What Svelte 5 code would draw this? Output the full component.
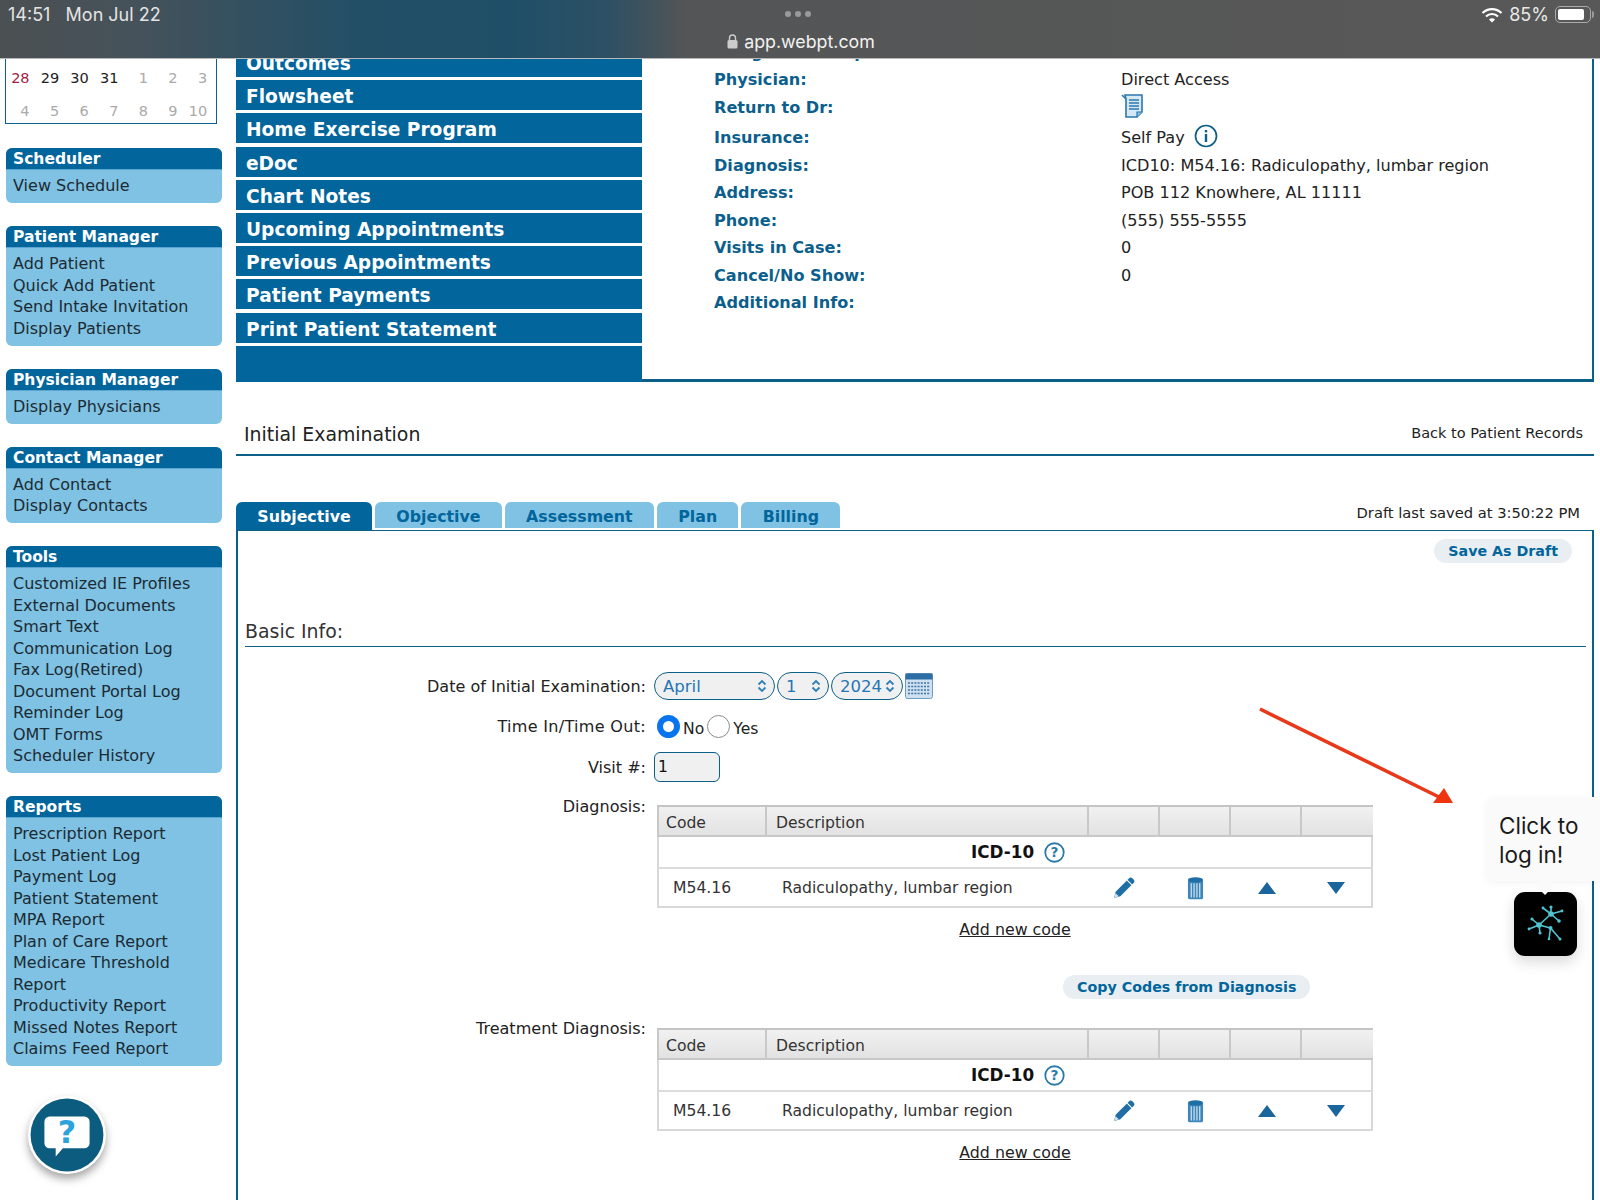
<script>
  const sidebar = [
    { title: 'Scheduler', items: ['View Schedule'] },
    { title: 'Patient Manager', items: ['Add Patient', 'Quick Add Patient', 'Send Intake Invitation', 'Display Patients'] },
    { title: 'Physician Manager', items: ['Display Physicians'] },
    { title: 'Contact Manager', items: ['Add Contact', 'Display Contacts'] },
    { title: 'Tools', items: ['Customized IE Profiles', 'External Documents', 'Smart Text', 'Communication Log', 'Fax Log(Retired)', 'Document Portal Log', 'Reminder Log', 'OMT Forms', 'Scheduler History'] },
    { title: 'Reports', items: ['Prescription Report', 'Lost Patient Log', 'Payment Log', 'Patient Statement', 'MPA Report', 'Plan of Care Report', 'Medicare Threshold Report', 'Productivity Report', 'Missed Notes Report', 'Claims Feed Report'] }
  ];
  const menu = ['Outcomes', 'Flowsheet', 'Home Exercise Program', 'eDoc', 'Chart Notes', 'Upcoming Appointments', 'Previous Appointments', 'Patient Payments', 'Print Patient Statement'];
  const tabs = ['Subjective', 'Objective', 'Assessment', 'Plan', 'Billing'];
  const week1 = [['28', 'red'], ['29', ''], ['30', ''], ['31', ''], ['1', 'dim'], ['2', 'dim'], ['3', 'dim']];
  const week2 = ['4', '5', '6', '7', '8', '9', '10'];
  const diagTables = [
    { label: 'Diagnosis:', copy: true },
    { label: 'Treatment Diagnosis:', copy: false }
  ];
</script>

{#snippet updown()}
  <svg class="chev" viewBox="0 0 10 14" width="10" height="14"><path d="M1.5 5.5 5 2l3.5 3.5M1.5 8.5 5 12l3.5-3.5" fill="none" stroke="#2f7fb8" stroke-width="1.8"/></svg>
{/snippet}

<div class="page">
  <header class="bar">
    <div class="bar-top">
      <span class="clock">14:51&nbsp;&nbsp; Mon Jul 22</span>
      <span class="dots"><i></i><i></i><i></i></span>
      <span class="status">
        <svg width="22" height="16" viewBox="0 0 22 16"><path d="M1.5 6a13.5 13.5 0 0 1 19 0" fill="none" stroke="#fff" stroke-width="2.2"/><path d="M5 9.5a8.5 8.5 0 0 1 12 0" fill="none" stroke="#fff" stroke-width="2.2"/><path d="M8 12.5 11 15.5l3-3a4.2 4.2 0 0 0-6 0z" fill="#fff"/></svg>
        <span>85%</span>
        <span class="battery"><b></b></span>
      </span>
    </div>
    <div class="url">
      <svg width="11" height="15" viewBox="0 0 11 15"><path d="M2.5 6V4a3 3 0 0 1 6 0v2" fill="none" stroke="#ccc" stroke-width="1.4"/><rect x="0.5" y="6" width="10" height="8.5" rx="1.5" fill="#ccc"/></svg>
      <span>app.webpt.com</span>
    </div>
  </header>

  <div class="body">
    <aside class="side">
      <div class="cal">
        <div class="cal-row">{#each week1 as d}<span class={d[1]}>{d[0]}</span>{/each}</div>
        <div class="cal-row">{#each week2 as d}<span class="dim">{d}</span>{/each}</div>
      </div>
      {#each sidebar as s}
        <section class="box">
          <h3>{s.title}</h3>
          <ul>{#each s.items as it}<li>{it}</li>{/each}</ul>
        </section>
      {/each}
      <div class="help">
        <svg width="78" height="78" viewBox="0 0 76 76">
          <circle cx="38" cy="38" r="37.5" fill="#fff"/>
          <circle cx="38" cy="38" r="35.5" fill="#0c5c80"/>
          <path d="M21 20h34a5 5 0 0 1 5 5v21a5 5 0 0 1-5 5H34l-7 8v-8h-6a5 5 0 0 1-5-5V25a5 5 0 0 1 5-5z" fill="#fff"/>
          <text x="38" y="46" text-anchor="middle" class="q">?</text>
        </svg>
      </div>
    </aside>

    <main class="main">
      <div class="top">
        <nav class="menu">
          {#each menu as m}<a href="#x">{m}</a>{/each}
          <div class="menu-end"></div>
        </nav>
        <div class="info">
          <div class="irow"><b>Assigned Therapist:</b><span></span></div>
          <div class="irow"><b>Physician:</b><span>Direct Access</span></div>
          <div class="irow"><b>Return to Dr:</b><span>
            <svg class="doc" width="22" height="24" viewBox="0 0 22 24"><path d="M4 1h17v17l-5 5H5V5z" fill="#d5e8f4" stroke="#2b78ad" stroke-width="1.6"/><path d="M1 1l4 4M8 6h10M8 9h10M8 12h10M8 15h10" stroke="#2b78ad" stroke-width="1.6"/><path d="M16 23v-5h5" fill="#8fc0de" stroke="#2b78ad" stroke-width="1.2"/></svg>
          </span></div>
          <div class="irow"><b>Insurance:</b><span class="ins">Self Pay
            <svg width="24" height="24" viewBox="0 0 24 24"><circle cx="12" cy="12" r="10.5" fill="none" stroke="#0c5f86" stroke-width="1.7"/><rect x="10.8" y="10" width="2.4" height="8" fill="#0c5f86"/><rect x="10.8" y="6" width="2.4" height="2.4" fill="#0c5f86"/></svg>
          </span></div>
          <div class="irow"><b>Diagnosis:</b><span>ICD10: M54.16: Radiculopathy, lumbar region</span></div>
          <div class="irow"><b>Address:</b><span>POB 112 Knowhere, AL 11111</span></div>
          <div class="irow"><b>Phone:</b><span>(555) 555-5555</span></div>
          <div class="irow"><b>Visits in Case:</b><span>0</span></div>
          <div class="irow"><b>Cancel/No Show:</b><span>0</span></div>
          <div class="irow"><b>Additional Info:</b><span></span></div>
        </div>
      </div>

      <div class="title-row">
        <h1>Initial Examination</h1>
        <a href="#x">Back to Patient Records</a>
      </div>

      <div class="tab-row">
        <div class="tabs">
          {#each tabs as t, i}<span class="tab" class:active={i === 0}>{t}</span>{/each}
        </div>
        <span class="draft">Draft last saved at 3:50:22 PM</span>
      </div>

      <div class="panel">
        <div class="save-row"><button>Save As Draft</button></div>
        <h2>Basic Info:</h2>

        <div class="frow date-row">
          <label for="m">Date of Initial Examination:</label>
          <div class="ctl">
            <span class="sel s1"><select id="m"><option>April</option></select>{@render updown()}</span>
            <span class="sel s2"><select><option>1</option></select>{@render updown()}</span>
            <span class="sel s3"><select><option>2024</option></select>{@render updown()}</span>
            <svg class="calicon" width="28" height="26" viewBox="0 0 28 26">
              <rect x="0.5" y="0.5" width="27" height="25" rx="2" fill="#cfe0ee" stroke="#6d9cc4"/>
              <rect x="0.5" y="0.5" width="27" height="6" fill="#2d6ea5"/>
              <path d="M3 10h22M3 13.5h22M3 17h22M3 20.5h22" stroke="#3e74ab" stroke-width="1.6" stroke-dasharray="2 1.2"/>
            </svg>
          </div>
        </div>

        <div class="frow time-row">
          <span class="lab">Time In/Time Out:</span>
          <div class="ctl radios">
            <input type="radio" name="t" checked /><span>No</span>
            <input type="radio" name="t" /><span>Yes</span>
          </div>
        </div>

        <div class="frow visit-row">
          <label for="v">Visit #:</label>
          <div class="ctl"><input id="v" class="visit" value="1" /></div>
        </div>

        {#each diagTables as d}
          <div class="frow diag-row">
            <span class="lab">{d.label}</span>
            <div class="diag">
              <div class="tbl">
                <div class="th"><span>Code</span><span>Description</span><span></span><span></span><span></span><span></span></div>
                <div class="icd"><b>ICD-10</b>
                  <svg width="21" height="21" viewBox="0 0 20 20"><circle cx="10" cy="10" r="8.8" fill="#fff" stroke="#2a7aa8" stroke-width="1.7"/><text x="10" y="14.5" text-anchor="middle" class="qs">?</text></svg>
                </div>
                <div class="td">
                  <span>M54.16</span><span>Radiculopathy, lumbar region</span>
                  <span class="ic"><svg width="25" height="25" viewBox="0 0 24 24"><path d="M2 22l1.5-6L16 3.5a2.8 2.8 0 0 1 4 0l.5.5a2.8 2.8 0 0 1 0 4L8 20.5z" fill="#1f6ea6"/><path d="M14.5 5l4.5 4.5" stroke="#fff" stroke-width="1"/><path d="M2 22l1.5-4.5 3 3z" fill="#cfe3f1"/></svg></span>
                  <span class="ic"><svg width="17" height="24" viewBox="0 0 18 24"><path d="M1 4h16v18a2 2 0 0 1-2 2H3a2 2 0 0 1-2-2z" fill="#3c86b8"/><ellipse cx="9" cy="3.5" rx="8" ry="2.8" fill="#1f6ea6"/><path d="M4.5 7v15M7.5 7v15M10.5 7v15M13.5 7v15" stroke="#cde2f1" stroke-width="1.3"/></svg></span>
                  <span class="ic"><svg width="18" height="12" viewBox="0 0 18 12"><path d="M9 0l9 12H0z" fill="#1a659c"/></svg></span>
                  <span class="ic"><svg width="18" height="12" viewBox="0 0 18 12"><path d="M0 0h18L9 12z" fill="#1a659c"/></svg></span>
                </div>
              </div>
              <a class="add" href="#x">Add new code</a>
              {#if d.copy}
                <div class="copy-row"><button>Copy Codes from Diagnosis</button></div>
              {/if}
            </div>
          </div>
        {/each}
      </div>
    </main>
  </div>

  <svg class="arrow" width="210" height="112" viewBox="0 0 210 112">
    <line x1="1" y1="2" x2="180" y2="90" stroke="#e8391a" stroke-width="3.6"/>
    <path d="M194 96H174L185 81z" fill="#f0340f"/>
  </svg>

  <div class="tip">Click to log in!</div>
  <div class="tip-notch"></div>
  <div class="appicon">
    <svg width="63" height="64" viewBox="0 0 63 64">
      <g stroke="#4fc3d0" stroke-width="1.6" fill="none">
        <path d="M25 33 37 22M25 33 36.5 36M25 33 18 27M25 33 15 37M25 33 26 41M37 22 29 16M37 22V15M37 22 48 19M37 22 45 29M36.5 36 46 47M36.5 36 35 47"/>
      </g>
      <g fill="#4fc3d0">
        <circle cx="25" cy="33" r="2.8"/><circle cx="37" cy="22" r="2.8"/><circle cx="36.5" cy="36" r="2"/>
        <circle cx="18" cy="27" r="1.6"/><circle cx="15" cy="37" r="1.4"/><circle cx="26" cy="41" r="1.6"/>
        <circle cx="29" cy="16" r="1.4"/><circle cx="37" cy="15" r="1.6"/><circle cx="48" cy="19" r="1.4"/>
        <circle cx="45" cy="29" r="1.8"/><circle cx="46" cy="47" r="1.5"/><circle cx="35" cy="47" r="1.3"/>
      </g>
    </svg>
  </div>
</div>

<style>
  :global(body) { margin: 0; background: #fff; }
  .page {
    position: relative;
    width: 1600px;
    height: 1200px;
    overflow: hidden;
    font-family: "DejaVu Sans", Verdana, sans-serif;
    color: #222;
    font-size: 15px;
  }

  /* browser bar */
  .bar {
    position: relative;
    z-index: 5;
    height: 58px;
    box-sizing: border-box;
    background: linear-gradient(90deg, #4b5052 0, #46525a 8%, #234f66 22%, #1f4f68 32%, #2d5064 38%, #545556 43%, #585858 100%);
    color: #f4f4f4;
    font-family: Inter, "Liberation Sans", sans-serif;
    box-shadow: 0 1px 0 #b8b8b8;
  }
  .bar-top { position: relative; display: flex; justify-content: space-between; align-items: center; height: 29px; padding: 0 9px 0 8px; }
  .clock { font-size: 18px; color: #e4e4e4; }
  .dots { position: absolute; left: 785px; top: 11px; display: flex; gap: 4px; }
  .dots i { width: 6px; height: 6px; border-radius: 50%; background: #9a9a9a; }
  .status { display: flex; align-items: center; gap: 6px; font-size: 18px; color: #e8e8e8; }
  .battery { position: relative; width: 36px; height: 17px; border: 1px solid #aaa; border-radius: 5px; padding: 2px; box-sizing: border-box; display: flex; }
  .battery::after { content: ""; position: absolute; right: -4px; top: 4px; width: 2px; height: 7px; background: #999; border-radius: 0 2px 2px 0; }
  .battery b { width: 85%; background: #fff; border-radius: 2px; }
  .url { display: flex; justify-content: center; align-items: center; gap: 6px; font-size: 17.8px; height: 24px; padding-left: 2px; color: #f2f2f2; }

  .body { display: flex; height: 1142px; }

  /* sidebar */
  .side { width: 236px; flex: none; padding-left: 6px; box-sizing: border-box; }
  .cal {
    width: 212px;
    height: 66px;
    box-sizing: border-box;
    margin-left: -1px;
    border: 1px solid #0c5f8f;
    border-top: 0;
    padding: 3px 0 0 0;
    font-size: 14.5px;
  }
  .cal-row { display: grid; grid-template-columns: repeat(7, 29.6px); height: 33px; align-items: center; text-align: right; color: #222; margin-left: -6px; }
  .cal-row .red { color: #a01f45; }
  .cal-row .dim { color: #aaa; }
  .box { width: 216px; margin-top: 23px; border-radius: 6px; background: #7fc2e3; overflow: hidden; }
  .cal + .box { margin-top: 24px; }
  .box h3 { margin: 0; height: 21px; background: #02659c; color: #fff; font-size: 15.5px; font-weight: 700; line-height: 23px; padding-left: 7px; border-bottom: 1px solid #5aa6d0; }
  .box ul { margin: 0; padding: 5px 7px 6.5px; list-style: none; }
  .box li { line-height: 21.5px; font-size: 16px; color: #1c2b33; }
  .help { margin: 30px 0 0 22px; width: 78px; height: 78px; border-radius: 50%; box-shadow: 0 5px 9px rgba(0,0,0,.35); }
  .q { font: 700 31px "DejaVu Sans", sans-serif; fill: #2ea3db; }
  .qs { font: 700 13px "DejaVu Sans", sans-serif; fill: #2a7aa8; }

  /* top */
  .main { flex: 1; min-width: 0; }
  .top { display: flex; height: 324px; width: 1358px; }
  .menu { width: 406px; flex: none; display: flex; flex-direction: column; gap: 3.2px; }
  .menu a { height: 30px; flex: none; background: #02659c; color: #fff; font-weight: 700; font-size: 18.6px; line-height: 34px; padding-left: 10px; text-decoration: none; overflow: hidden; }
  .menu a:first-child { height: 19px; line-height: 12px; }
  .menu-end { flex: 1; background: #02659c; }
  .info {
    flex: 1;
    box-sizing: border-box;
    overflow: hidden;
    border-right: 2px solid #0c5f86;
    border-bottom: 3px solid #0c5f86;
    padding: 0 0 0 72px;
    font-size: 16.1px;
  }
  .irow { display: grid; grid-template-columns: 407px 1fr; align-items: center; height: 27.4px; }
  .irow:nth-child(1) { height: 27px; margin-top: -19.5px; }
  .irow:nth-child(3), .irow:nth-child(4) { height: 29.5px; }
  .irow b { color: #0c5f8c; font-weight: 700; font-size: 16.1px; }
  .irow span { color: #222; }
  .ins { display: flex; align-items: center; gap: 9px; }
  .ins svg { margin-top: -2px; }
  .doc { display: block; margin-top: -3px; }

  .title-row { width: 1358px; box-sizing: border-box; height: 74px; display: flex; justify-content: space-between; align-items: flex-end; padding: 0 8px 8px 8px; border-bottom: 2px solid #0c5f86; }
  .title-row h1 { margin: 0; font-size: 18.9px; font-weight: 400; color: #222; line-height: 24px; }
  .title-row a { color: #222; text-decoration: none; font-size: 14.5px; margin-bottom: 5px; margin-right: 3px; }

  .tab-row { width: 1358px; display: flex; justify-content: space-between; align-items: flex-end; margin-top: 45px; height: 29px; }
  .tabs { display: flex; gap: 3px; align-items: flex-end; }
  .tab { height: 26px; margin-bottom: 2px; padding: 0 21.3px; background: #7fc2e3; color: #02659c; font-weight: 700; font-size: 15.8px; line-height: 29px; border-radius: 6px 6px 0 0; }
  .tab.active { height: 28px; margin-bottom: 0; background: #02659c; color: #fff; line-height: 29px; }
  .draft { font-size: 14.7px; margin: 0 14px 9px 0; color: #222; }

  .panel { width: 1358px; box-sizing: border-box; height: 700px; border: 2px solid #0c5f86; border-width: 1px 2px 0 2px; padding: 0 7px; }
  .save-row { display: flex; justify-content: flex-end; padding: 8px 13px 0 0; }
  button { border: 0; font: 700 14.25px "DejaVu Sans", sans-serif; color: #02659c; background: #e8eef2; height: 24px; border-radius: 12px; padding: 0 14px; }
  .panel h2 { margin: 55px 0 0; font-size: 18.9px; font-weight: 400; color: #333; height: 28px; line-height: 26px; border-bottom: 1.5px solid #0c5f86; width: 1341px; }

  .frow { display: grid; grid-template-columns: 401px 1fr; column-gap: 8px; }
  .frow label, .lab { text-align: right; font-size: 16.05px; color: #222; }
  .time-row .lab { letter-spacing: .3px; }
  .date-row { margin-top: 24px; align-items: center; height: 30px; }
  .time-row { margin-top: 10px; align-items: center; height: 30px; }
  .visit-row { margin-top: 11px; align-items: center; height: 30px; }
  .diag-row { margin-top: 15px; }
  .diag-row:last-child { margin-top: 0; }
  .diag-row:last-child .diag { margin-top: 9px; }
  .ctl { display: flex; align-items: center; gap: 2px; }
  .sel { position: relative; display: block; height: 28px; }
  .sel select {
    appearance: none;
    width: 100%;
    height: 100%;
    border: 1.5px solid #0c5f86;
    border-radius: 14px;
    background: #f0f0f0;
    color: #2476b5;
    font: 16.5px "DejaVu Sans", sans-serif;
    padding: 0 0 0 8px;
  }
  .chev { position: absolute; right: 8px; top: 7px; pointer-events: none; }
  .s1 { width: 121px; } .s2 { width: 52px; } .s3 { width: 72px; }
  .radios { gap: 0; margin-left: 3px; }
  .radios input { appearance: none; margin: 0; width: 23px; height: 23px; border-radius: 50%; border: 1.5px solid #8a8a8a; background: #fff; box-sizing: border-box; }
  .radios input:checked { border: 6px solid #0a74ee; }
  .radios span { font-size: 15.6px; margin: 5px 3px 0 3px; }
  .visit { width: 66px; height: 30px; box-sizing: border-box; border: 1.5px solid #0c5f86; border-radius: 6px; background: #f0f0f0; font: 15.5px "DejaVu Sans", sans-serif; padding: 0 3px; color: #111; }

  .diag { width: 716px; margin-left: 3px; margin-top: 8px; display: flex; flex-direction: column; align-items: center; }
  .tbl { width: 100%; box-sizing: border-box; border: 2px solid #d8d8d8; border-top: 0; font-size: 15.6px; }
  .th, .td { display: grid; grid-template-columns: 110px 322px 71px 71px 71px 1fr; }
  .th { height: 32px; background: linear-gradient(#f1f1f1, #e8e8e8 60%, #e2e2e2); border-top: 2px solid #c4c4c4; border-bottom: 2px solid #c8c8c8; box-sizing: border-box; margin: 0 -2px; }
  .th span { height: 28px; overflow: hidden; border-right: 2px solid #c8c8c8; padding-left: 7px; line-height: 32px; color: #333; }
  .th span:nth-child(2) { padding-left: 9px; }
  .th span:last-child { border-right: 0; }
  .th span:first-child { border-left: 2px solid #c8c8c8; }
  .icd { height: 30px; border-bottom: 2px solid #dcdcdc; display: flex; justify-content: center; align-items: center; gap: 10px; font-size: 16.8px; color: #111; padding-left: 6px; }
  .td { height: 37px; align-items: center; color: #333; }
  .td span:nth-child(1) { padding-left: 14px; }
  .td span:nth-child(2) { padding-left: 13px; }
  .td .ic { display: flex; justify-content: center; align-items: center; padding-right: 4px; }
  .add { color: #222; font-size: 15.8px; margin-top: 12px; }
  .copy-row { width: 100%; display: flex; justify-content: flex-start; padding-left: 406px; margin-top: 36px; box-sizing: border-box; height: 44px; }
  .copy-row button { white-space: nowrap; }

  /* overlays */
  .arrow { position: absolute; left: 1259px; top: 707px; z-index: 3; }
  .tip { position: absolute; left: 1487px; top: 797px; width: 113px; height: 84px; box-sizing: border-box; padding: 14px 12px; background: #fafafa; border-radius: 8px 0 0 8px; font: 22.5px/29px Inter, "Liberation Sans", sans-serif; color: #1a1a1a; z-index: 3; box-shadow: 0 2px 8px rgba(0,0,0,.05); }
  .tip-notch { position: absolute; left: 1538px; top: 878px; width: 14px; height: 14px; background: #fafafa; transform: rotate(45deg); z-index: 4; }
  .appicon { position: absolute; left: 1514px; top: 892px; width: 63px; height: 64px; border-radius: 11px; background: #000; box-shadow: 0 6px 14px rgba(0,0,0,.15); z-index: 3; }
  .appicon svg { display: block; }
</style>
